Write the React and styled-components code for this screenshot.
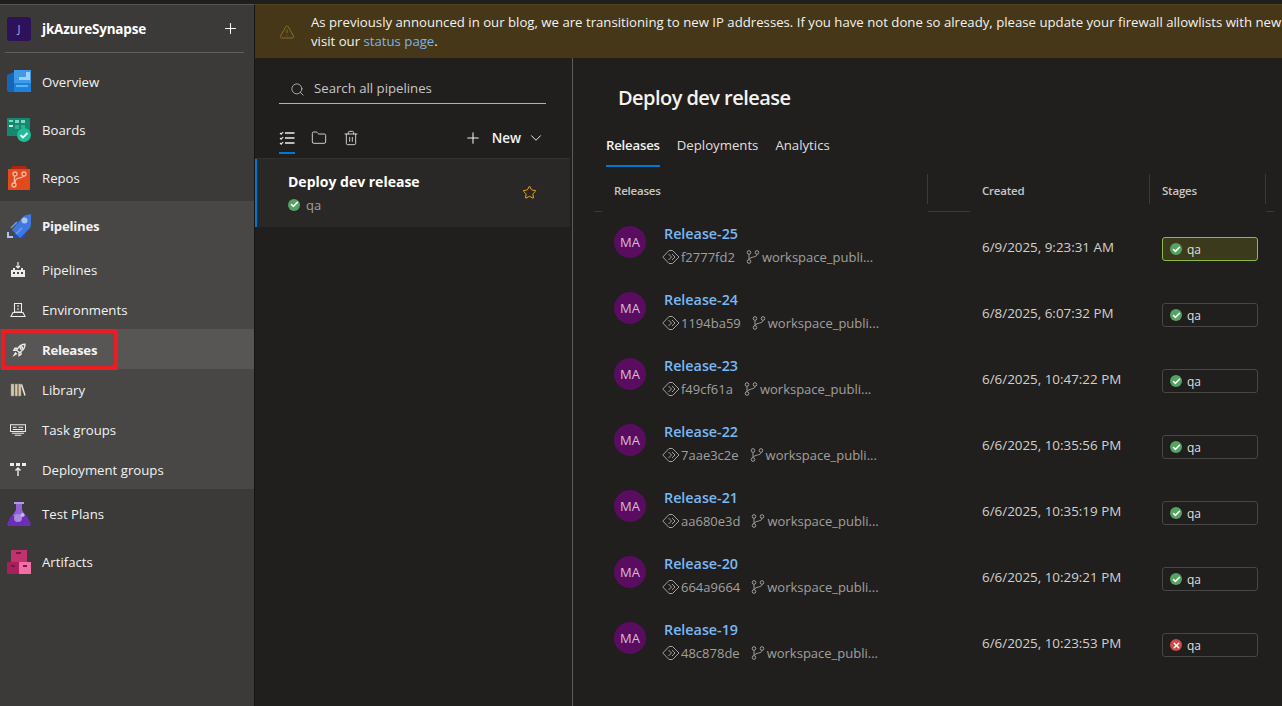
import React from 'react';
import styled, { createGlobalStyle } from 'styled-components';
import { Search, Folder, Trash2, Plus, ChevronDown, Star, TriangleAlert, Check, X } from 'lucide-react';

const FONT = '"Open Sans", "Noto Sans", sans-serif';

const GlobalStyle = createGlobalStyle`
  html, body { margin: 0; padding: 0; background: #201f1e; }
  body { font-family: ${FONT}; font-size: 13px; color: #f3f2f1; }
  #root { width: 1282px; height: 706px; overflow: hidden; }
`;

const Page = styled.div`width:1282px;height:706px;display:flex;flex-direction:column;overflow:hidden;background:#201f1e;`;
const TopStrip = styled.div`height:4px;flex:none;background:#201f1e;`;
const Body = styled.div`flex:1;display:flex;min-height:0;`;

// Sidebar
const Sidebar = styled.nav`position:relative;width:254px;flex:none;background:#3b3a39;border-top:1px solid #565554;border-right:1px solid #151515;box-sizing:content-box;`;
const ProjectRow = styled.div`height:47px;margin:0 15px 0 7px;display:flex;align-items:center;color:#fff;`;
const ProjectBadge = styled.div`width:24px;height:24px;border-radius:3px;background:#2d1259;color:#b9a7d6;font-size:11px;display:flex;align-items:center;justify-content:center;`;
const ProjectName = styled.div`margin-left:11px;font-size:13.5px;font-weight:700;flex:1;letter-spacing:-.2px;`;
const Divider = styled.div`height:1px;background:#605e5c;margin:0 10px 4px 5px;`;
const Item = styled.div`height:48px;box-sizing:border-box;padding:2px 0 0 7px;display:flex;align-items:center;font-size:13.2px;color:#f3f2f1;font-weight:${p => (p.$bold ? 700 : 400)};letter-spacing:${p => (p.$bold ? '-.25px' : '0')};background:${p => (p.$open ? '#484746' : 'transparent')};`;
const SubGroup = styled.div`background:#484746;`;
const SubItem = styled.div`height:40px;box-sizing:border-box;padding:2px 0 0 10px;display:flex;align-items:center;font-size:13.2px;color:#f3f2f1;font-weight:${p => (p.$active ? 700 : 400)};letter-spacing:${p => (p.$active ? '-.25px' : '0')};background:${p => (p.$active ? '#575655' : 'transparent')};`;
const ItemIcon = styled.span`width:24px;height:24px;flex:none;margin-right:11px;display:flex;`;
const SubIcon = styled.span`width:16px;height:16px;flex:none;margin-right:16px;display:flex;`;
const Annotation = styled.div`position:absolute;left:1px;top:324px;width:109px;height:33px;border:4px solid #ed1c24;pointer-events:none;`;

// Main
const Main = styled.div`flex:1;min-width:0;display:flex;flex-direction:column;`;
const Banner = styled.div`height:45px;flex:none;padding:4px 0 4px 24px;background:#453718;border-top:1px solid #4f4122;display:flex;align-items:center;overflow:hidden;`;
const BannerText = styled.div`margin-left:16px;width:1000px;flex:none;font-size:13.2px;line-height:19px;color:#f3f2f1;white-space:nowrap;`;
const Link = styled.a`color:#79b4ec;`;
const Columns = styled.div`flex:1;display:flex;min-height:0;`;

const ListPanel = styled.div`width:315px;flex:none;padding-right:2px;border-right:1px solid #5c5b5a;`;
const SearchBox = styled.div`height:28px;box-sizing:content-box;margin:17px 24px 0 24px;display:flex;align-items:center;padding:0 0 0 11px;border-bottom:1px solid #b3b0ad;color:#c8c6c4;font-size:13.2px;`;
const SearchText = styled.span`margin:-2px 0 0 9px;`;
const Toolbar = styled.div`height:55px;box-sizing:border-box;padding:14px 25px 0 24px;display:flex;align-items:center;border-bottom:1px solid #323130;color:#e6e6e6;`;
const ToolTab = styled.span`height:40px;width:16px;margin-right:16px;display:flex;align-items:center;position:relative;
  &::after{content:'';display:${p => (p.$on ? 'block' : 'none')};position:absolute;left:0;right:0;bottom:4px;height:2px;background:#0078d4;}`;
const NewButton = styled.div`margin-left:auto;display:flex;align-items:center;font-weight:600;font-size:13.5px;color:#f3f2f1;`;
const NewLabel = styled.span`margin:0 6px 0 10px;`;
const PipelineRow = styled.div`height:68px;box-sizing:border-box;display:flex;align-items:center;padding:0 33px 1px 31px;background:#292827;border-left:2px solid #0078d4;`;
const PipelineText = styled.div`flex:1;`;
const PipelineName = styled.div`font-size:14px;font-weight:700;color:#fff;line-height:20px;`;
const PipelineStage = styled.div`display:flex;align-items:center;font-size:13px;color:#a19f9d;margin-top:4px;line-height:18px;`;
const StatusDot = styled.span`width:12px;height:12px;border-radius:50%;flex:none;background:${p => (p.$fail ? '#cd4a45' : '#55a362')};color:#fff;display:flex;align-items:center;justify-content:center;`;
const StageLabel = styled.span`margin-left:6px;`;

const DetailPanel = styled.div`flex:1;min-width:0;padding-left:21px;`;
const Title = styled.h1`margin:0;padding:25px 0 0 24px;font-size:20px;line-height:30px;font-weight:600;letter-spacing:-.55px;color:#f3f2f1;`;
const Tabs = styled.div`display:flex;gap:17px;margin:15px 0 0 12px;height:39px;`;
const Tab = styled.div`height:39px;line-height:34px;box-sizing:border-box;font-size:13.2px;color:${p => (p.$on ? '#f3f2f1' : '#e1dfdd')};font-weight:${p => (p.$on ? 600 : 400)};letter-spacing:${p => (p.$on ? '-.2px' : '0')};border-bottom:${p => (p.$on ? '2px solid #0078d4' : '0')};`;

const GRID = '8px 326px 42px 180px 116px 8px';
const HeaderRow = styled.div`display:grid;grid-template-columns:${GRID};height:45px;align-items:start;`;
const Spacer = styled.div`height:37px;margin-top:7px;border-bottom:1px solid #3b3a39;`;
const HeaderCell = styled.div`height:30px;box-sizing:border-box;margin-top:7px;padding:2px 0 0 12px;display:flex;align-items:center;font-size:11.5px;font-weight:600;letter-spacing:-.2px;color:#c8c6c4;border-right:${p => (p.$sep ? '1px solid #3b3a39' : '0')};`;
const Row = styled.div`display:grid;grid-template-columns:${GRID};height:66px;`;
const ReleaseCell = styled.div`grid-column:2;padding:14px 0 0 12px;display:flex;`;
const Avatar = styled.div`width:32px;height:32px;border-radius:50%;background:#5a0d60;color:#d6bcd8;font-size:13px;display:flex;align-items:center;justify-content:center;flex:none;`;
const ReleaseText = styled.div`margin:-2px 0 0 18px;min-width:0;`;
const ReleaseName = styled.div`font-size:14.3px;font-weight:600;line-height:20px;color:#79b8f3;`;
const Meta = styled.div`display:flex;align-items:center;margin:3px 0 0 -2px;line-height:20px;font-size:13px;color:#a19f9d;white-space:nowrap;`;
const Hash = styled.span`margin-left:1px;`;
const BranchIcon = styled.span`display:flex;margin:0 2px 0 11px;`;
const CreatedCell = styled.div`grid-column:4;padding:25px 0 0 12px;font-size:13.4px;line-height:20px;color:#d2d0ce;white-space:nowrap;`;
const StageCell = styled.div`grid-column:5;padding:25px 8px 0 12px;`;
const StageChip = styled.div`height:24px;box-sizing:border-box;display:flex;align-items:center;padding-left:7px;border-radius:3px;font-size:12px;color:#e1dfdd;border:1px solid ${p => (p.$active ? '#8cbb47' : '#484644')};background:${p => (p.$active ? '#3b3a1d' : 'transparent')};
  ${StageLabel}{margin-left:5px;}`;

const OverviewIcon = () => (
  <svg width="24" height="24" viewBox="0 0 24 24">
    <path d="M7 0h17v22H7z" fill="#3f9be8" />
    <path d="M0 6q0-1 1-1.500L7 2v20H2q-2 0-2-2z" fill="#1665b8" />
    <path d="M19 2h4v8H12V7h7z" fill="#9fd0f5" />
    <path d="M7 13h17v9H7z" fill="#1c82dc" />
    <path d="M9 15h12v2H9z" fill="#5fb0ee" />
  </svg>
);
const BoardsIcon = () => (
  <svg width="24" height="24" viewBox="0 0 24 24">
    <rect y="0" width="23" height="18" fill="#14896e" />
    <path d="M2 2h4v2H2zM8 2h4v3H8zM14 2h4v3h-4z" fill="#7fd8c2" />
    <path d="M2 7h4v2H2z" fill="#c9f2e7" /><path d="M8 7h4v4H8z" fill="#35ad92" /><path d="M14 7h4v3h-4z" fill="#35ad92" />
    <circle cx="17" cy="17" r="7" fill="#1fbd9a" />
    <path d="M13.500 17l2.500 2.500 4.500-4.500" fill="none" stroke="#fff" strokeWidth="1.800" />
  </svg>
);
const ReposIcon = () => (
  <svg width="24" height="24" viewBox="0 0 24 24">
    <path d="M5 0h14l1 3H4z" fill="#a8290c" />
    <rect x="1" y="3" width="22" height="21" fill="#e2491c" />
    <g fill="none" stroke="#f5b8a3" strokeWidth="1.300">
      <circle cx="7" cy="19" r="2" /><circle cx="8" cy="8" r="2" /><circle cx="17" cy="8" r="2" />
      <path d="M8 17c.5-4 1-4 4-5s5-1 5-2M7.500 10l-.3 7" />
    </g>
  </svg>
);
const PipelinesIcon = () => (
  <svg width="24" height="24" viewBox="0 0 24 24">
    <path d="M6 24h11l4-12-9 2z" fill="#1a4fc0" />
    <path d="M24 0v11q0 2-2 4l-9 9-8-8 9-11q3-4 6-4z" fill="#3f78e0" />
    <circle cx="17.500" cy="6.500" r="3" fill="#a7c3f5" />
    <path d="M4 14l6-6M9 20l6-6" stroke="#6f9cec" strokeWidth="1.500" />
    <path d="M0 18h2v4h4v2H0z" fill="#a7c3f5" />
  </svg>
);
const TestPlansIcon = () => (
  <svg width="24" height="24" viewBox="0 0 24 24">
    <rect x="7" y="0" width="10" height="2" fill="#b597e6" />
    <path d="M9 2h6v6l8 13q1 3-2 3H3q-3 0-2-3l8-13z" fill="#8f63d6" />
    <path d="M4 14h16l4 8q-1 2-3 2H3q-2 0-3-2z" fill="#6a2fb5" />
    <circle cx="11" cy="16" r="4" fill="#a98adf" /><circle cx="15.500" cy="13" r="2" fill="#c7b2ec" />
  </svg>
);
const ArtifactsIcon = () => (
  <svg width="24" height="24" viewBox="0 0 24 24">
    <rect x="4" y="0" width="16" height="12" fill="#c2326f" />
    <rect x="0" y="12" width="12" height="12" fill="#a81f5c" />
    <rect x="12" y="12" width="12" height="12" fill="#ef6fa6" />
    <path d="M9 2h5v2H9zM4 15h4v2H4zM16 15h4v2h-4z" fill="#7d1547" />
  </svg>
);

const line = { fill: 'none', stroke: '#eeecea', strokeWidth: 1.1 };
const SubPipelines = () => (
  <svg width="16" height="16" viewBox="0 0 16 16">
    <path d="M1 8h2V6h2v2h6V6h2v2h2v7H1z" fill="#eeecea" />
    <path d="M3 10h2v2H3zM7 10h2v2H7zM11 10h2v2h-2z" fill="#484746" />
    <path d="M8 0v6M6 4l2 2 2-2" fill="none" stroke="#eeecea" strokeWidth="1.200" />
  </svg>
);
const SubEnvironments = () => (
  <svg width="16" height="16" viewBox="0 0 16 16" {...line}>
    <path d="M4.500 1.500h7v8.500h-7zM7 4h2M7 7h2M3 10.500h10l2 4H1z" />
  </svg>
);
const SubReleases = () => (
  <svg width="16" height="16" viewBox="0 0 16 16">
    <g transform="translate(3 1.500) scale(.8)" fill="none" stroke="#eeecea" strokeWidth="1.700">
      <path d="M15 1c-4 0-6 1-8 4L4.500 8l3.500 3.500 3-2.500c3-2 4-4 4-8zM5 6H2.500L1 8.500h3M10 11v2.500L7.500 15v-3M3.500 11L1.500 14.500 5 12.500" />
      <circle cx="10.500" cy="5.500" r="1.500" />
    </g>
  </svg>
);
const SubLibrary = () => (
  <svg width="16" height="16" viewBox="0 0 16 16">
    <path d="M1 2h3v12H1zM5 2h2.500v12H5zM8.500 2H11v12H8.500z" fill="#d9c9a4" stroke="#8a8884" strokeWidth=".5" />
    <path d="M11.500 2.500l3.500 11" stroke="#e8e6e4" strokeWidth="1.500" />
  </svg>
);
const SubTaskGroups = () => (
  <svg width="17" height="16" viewBox="0 0 17 16" {...line}>
    <path d="M.5 2.500h16v7H.5zM3 5h4M9 5h5M3 7.500h11M2 11.500h13M5 13.500h7" />
  </svg>
);
const SubDeployment = () => (
  <svg width="16" height="16" viewBox="0 0 16 16">
    <path d="M0 1h4v3H0zM6 1h4v3H6zM12 1h4v3h-4z" fill="#eeecea" />
    <path d="M8 14V6M5.500 8.500L8 6l2.500 2.500" fill="none" stroke="#eeecea" strokeWidth="1.400" />
  </svg>
);
const ListIcon = () => (
  <svg width="16" height="16" viewBox="0 0 16 16" fill="none" stroke="#eeecea">
    <path d="M6 3h9.500M6 8h9.500M6 13h9.500" strokeWidth="1.300" />
    <path d="M1 3l1.200 1.200L4.200 2M1 8l1.200 1.200L4.200 7M1 13l1.200 1.200L4.200 12" strokeWidth="1.100" />
  </svg>
);
const CommitIcon = () => (
  <svg width="18" height="16" viewBox="0 0 18 16" fill="none" stroke="#a19f9d" strokeWidth="1">
    <path d="M7 1.500L.8 8 7 14.500h3.500L17 8l-6.500-6.500z" />
    <path d="M6.500 5l3 3-3 3M10 5l3 3-3 3" />
  </svg>
);
const BranchSvg = () => (
  <svg width="14" height="14" viewBox="0 0 14 14" fill="none" stroke="#a19f9d" strokeWidth="1">
    <circle cx="3" cy="2.500" r="1.800" /><circle cx="3" cy="11.500" r="1.800" /><circle cx="11" cy="2.500" r="1.800" />
    <path d="M3 4.500v5M11 4.500c0 3-6.500 2-8 5" />
  </svg>
);

const navTop = [
  { label: 'Overview', Icon: OverviewIcon },
  { label: 'Boards', Icon: BoardsIcon },
  { label: 'Repos', Icon: ReposIcon },
];
const navSub = [
  { label: 'Pipelines', Icon: SubPipelines },
  { label: 'Environments', Icon: SubEnvironments },
  { label: 'Releases', Icon: SubReleases, active: true },
  { label: 'Library', Icon: SubLibrary },
  { label: 'Task groups', Icon: SubTaskGroups },
  { label: 'Deployment groups', Icon: SubDeployment },
];
const navBottom = [
  { label: 'Test Plans', Icon: TestPlansIcon },
  { label: 'Artifacts', Icon: ArtifactsIcon },
];
const releases = [
  { name: 'Release-25', hash: 'f2777fd2', created: '6/9/2025, 9:23:31 AM', active: true },
  { name: 'Release-24', hash: '1194ba59', created: '6/8/2025, 6:07:32 PM' },
  { name: 'Release-23', hash: 'f49cf61a', created: '6/6/2025, 10:47:22 PM' },
  { name: 'Release-22', hash: '7aae3c2e', created: '6/6/2025, 10:35:56 PM' },
  { name: 'Release-21', hash: 'aa680e3d', created: '6/6/2025, 10:35:19 PM' },
  { name: 'Release-20', hash: '664a9664', created: '6/6/2025, 10:29:21 PM' },
  { name: 'Release-19', hash: '48c878de', created: '6/6/2025, 10:23:53 PM', fail: true },
];

const Status = ({ fail }) => (
  <StatusDot $fail={fail}>{fail ? <X size={9} strokeWidth={4} /> : <Check size={9} strokeWidth={4} />}</StatusDot>
);

export default function App() {
  return (
    <Page>
      <GlobalStyle />
      <TopStrip />
      <Body>
        <Sidebar>
          <ProjectRow>
            <ProjectBadge>J</ProjectBadge>
            <ProjectName>jkAzureSynapse</ProjectName>
            <Plus size={17} strokeWidth={1.5} />
          </ProjectRow>
          <Divider />
          {navTop.map(({ label, Icon }) => (
            <Item key={label}><ItemIcon><Icon /></ItemIcon>{label}</Item>
          ))}
          <Item $open $bold><ItemIcon><PipelinesIcon /></ItemIcon>Pipelines</Item>
          <SubGroup>
            {navSub.map(({ label, Icon, active }) => (
              <SubItem key={label} $active={active}><SubIcon><Icon /></SubIcon>{label}</SubItem>
            ))}
          </SubGroup>
          {navBottom.map(({ label, Icon }) => (
            <Item key={label}><ItemIcon><Icon /></ItemIcon>{label}</Item>
          ))}
          <Annotation />
        </Sidebar>
        <Main>
          <Banner>
            <TriangleAlert size={16} color="#8f6d22" strokeWidth={1.5} style={{ flex: 'none' }} />
            <BannerText>
              As previously announced in our blog, we are transitioning to new IP addresses. If you have not done so already, please update your firewall allowlists with new
              <br />
              visit our <Link>status page</Link>.
            </BannerText>
          </Banner>
          <Columns>
            <ListPanel>
              <SearchBox>
                <Search size={15} strokeWidth={1.3} />
                <SearchText>Search all pipelines</SearchText>
              </SearchBox>
              <Toolbar>
                <ToolTab $on><ListIcon /></ToolTab>
                <ToolTab><Folder size={16} strokeWidth={1.3} /></ToolTab>
                <ToolTab><Trash2 size={16} strokeWidth={1.3} /></ToolTab>
                <NewButton>
                  <Plus size={18} strokeWidth={1.4} />
                  <NewLabel>New</NewLabel>
                  <ChevronDown size={18} strokeWidth={1.3} />
                </NewButton>
              </Toolbar>
              <PipelineRow>
                <PipelineText>
                  <PipelineName>Deploy dev release</PipelineName>
                  <PipelineStage><Status /><StageLabel>qa</StageLabel></PipelineStage>
                </PipelineText>
                <Star size={15} color="#f2a51d" strokeWidth={1.6} />
              </PipelineRow>
            </ListPanel>
            <DetailPanel>
              <Title>Deploy dev release</Title>
              <Tabs>
                <Tab $on>Releases</Tab>
                <Tab>Deployments</Tab>
                <Tab>Analytics</Tab>
              </Tabs>
              <HeaderRow>
                <Spacer />
                <HeaderCell $sep>Releases</HeaderCell>
                <Spacer />
                <HeaderCell $sep>Created</HeaderCell>
                <HeaderCell $sep>Stages</HeaderCell>
                <Spacer />
              </HeaderRow>
              {releases.map(r => (
                <Row key={r.name}>
                  <ReleaseCell>
                    <Avatar>MA</Avatar>
                    <ReleaseText>
                      <ReleaseName>{r.name}</ReleaseName>
                      <Meta>
                        <CommitIcon />
                        <Hash>{r.hash}</Hash>
                        <BranchIcon><BranchSvg /></BranchIcon>
                        workspace_publi...
                      </Meta>
                    </ReleaseText>
                  </ReleaseCell>
                  <CreatedCell>{r.created}</CreatedCell>
                  <StageCell>
                    <StageChip $active={r.active}><Status fail={r.fail} /><StageLabel>qa</StageLabel></StageChip>
                  </StageCell>
                </Row>
              ))}
            </DetailPanel>
          </Columns>
        </Main>
      </Body>
    </Page>
  );
}
